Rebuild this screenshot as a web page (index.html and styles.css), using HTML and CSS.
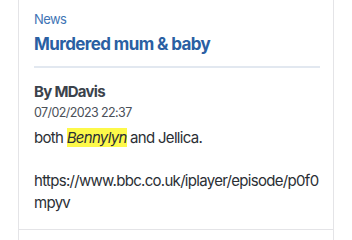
FILE: index.html
```html
<!DOCTYPE html>
<html>
<head>
<meta charset="utf-8">
<title>News</title>
<link rel="stylesheet" href="styles.css">
</head>
<body>
<div class="feed">
	<div class="post">
		<div class="category">News</div>
		<h2 class="headline">Murdered mum &amp; baby</h2>
		<div class="author">By MDavis</div>
		<div class="date">07/02/2023 22:37</div>
		<div class="body">
			<p>both <em class="mark">Bennylyn</em> and Jellica.</p>
			<p>https://www.bbc.co.uk/iplayer/episode/p0f0mpyv</p>
		</div>
	</div>
	<div class="post empty"></div>
</div>
</body>
</html>
```

FILE: styles.css
```css
body{
	margin: 0;
	background-color: #fff;
	font-family: "Inter", "Noto Sans", sans-serif;
}
.feed{
	width: 314px;
	height: 241px;
	margin-left: 18px;
	margin-top: -1px;
	overflow: hidden;
	border-left: 1px solid #e4e4e7;
	border-right: 1px solid #e4e4e7;
}
.post{
	padding: 11px 13px 16px 15px;
	border-bottom: 1px solid #e4e4e7;
}
.post.empty{
	border-bottom: none;
}
.category{
	font-size: 13px;
	line-height: 18px;
	letter-spacing: -0.6px;
	color: #3f74b5;
}
.headline{
	margin: 0;
	padding: 5px 0 11px;
	font-size: 17px;
	line-height: 22px;
	font-weight: 700;
	letter-spacing: -0.6px;
	color: #2a5fa3;
	border-bottom: 2px solid #e2e8f0;
}
.author{
	margin-top: 13px;
	font-size: 15px;
	line-height: 22px;
	font-weight: 700;
	letter-spacing: -0.7px;
	color: #3b424b;
}
.date{
	margin-top: 1px;
	font-size: 12.5px;
	line-height: 18px;
	letter-spacing: -0.6px;
	color: #4b5058;
}
.body{
	margin-top: 5px;
	font-size: 15px;
	line-height: 21.5px;
	letter-spacing: -0.7px;
	color: #2b2f35;
	word-break: break-all;
}
.body p{
	margin: 0 0 21.5px;
}
.body p:last-child{
	margin-bottom: 0;
}
.mark{
	background-color: #fdf94a;
}
```
